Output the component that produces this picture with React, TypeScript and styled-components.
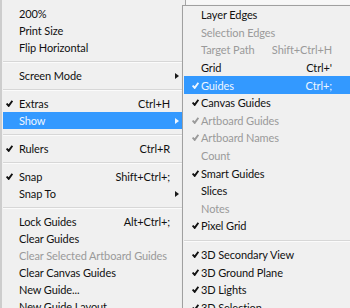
import React from 'react'
import styled, { createGlobalStyle } from 'styled-components'

type Item =
  | 'sep'
  | {
      label: string
      shortcut?: string
      checked?: boolean
      disabled?: boolean
      submenu?: boolean
      active?: boolean
    }

const mainItems: Item[] = [
  { label: '200%' },
  { label: 'Print Size' },
  { label: 'Flip Horizontal' },
  'sep',
  { label: 'Screen Mode', submenu: true },
  'sep',
  { label: 'Extras', shortcut: 'Ctrl+H', checked: true },
  { label: 'Show', submenu: true, active: true },
  'sep',
  { label: 'Rulers', shortcut: 'Ctrl+R', checked: true },
  'sep',
  { label: 'Snap', shortcut: 'Shift+Ctrl+;', checked: true },
  { label: 'Snap To', submenu: true },
  'sep',
  { label: 'Lock Guides', shortcut: 'Alt+Ctrl+;' },
  { label: 'Clear Guides' },
  { label: 'Clear Selected Artboard Guides', disabled: true },
  { label: 'Clear Canvas Guides' },
  { label: 'New Guide...' },
  { label: 'New Guide Layout' }
]

const showItems: Item[] = [
  { label: 'Layer Edges' },
  { label: 'Selection Edges', disabled: true },
  { label: 'Target Path', shortcut: 'Shift+Ctrl+H', disabled: true },
  { label: 'Grid', shortcut: "Ctrl+'" },
  { label: 'Guides', shortcut: 'Ctrl+;', checked: true, active: true },
  { label: 'Canvas Guides', checked: true },
  { label: 'Artboard Guides', checked: true, disabled: true },
  { label: 'Artboard Names', checked: true, disabled: true },
  { label: 'Count', disabled: true },
  { label: 'Smart Guides', checked: true },
  { label: 'Slices' },
  { label: 'Notes', disabled: true },
  { label: 'Pixel Grid', checked: true },
  'sep',
  { label: '3D Secondary View', checked: true },
  { label: '3D Ground Plane', checked: true },
  { label: '3D Lights', checked: true },
  { label: '3D Selection', checked: true }
]

const GlobalStyle = createGlobalStyle`
  html, body {
    margin: 0;
    padding: 0;
    background: #f7f7f7;
    overflow: hidden;
  }
  body {
    font-family: Lato, "Noto Sans", sans-serif;
    font-size: 11px;
    letter-spacing: -0.1px;
    color: #1a1a1a;
  }
`

const Screen = styled.div`
  position: relative;
  width: 350px;
  height: 308px;
  overflow: hidden;
`

const MainMenu = styled.div`
  width: 180px;
  height: 320px;
  padding: 5px 2px 0 1px;
  background: #f0f0f0;
  border-left: 2px solid #cdcdcd;
  border-right: 1px solid #a7a7a7;
  box-sizing: content-box;
`

/* the Show flyout lies over the right edge of the main menu */
const SubMenu = styled.div`
  position: absolute;
  left: 182px;
  top: 5px;
  width: 190px;
  height: 320px;
  padding: 0 1px;
  background: #f0f0f0;
  border: 1px solid #a0a0a0;
  box-shadow: 2px 2px 3px rgba(0, 0, 0, 0.25);
`

const Row = styled.div<{ $active?: boolean; $disabled?: boolean; $h: number; $pad: number }>`
  display: flex;
  align-items: center;
  height: ${({ $h }) => $h}px;
  padding-left: ${({ $pad }) => $pad}px;
  white-space: nowrap;
  background: ${({ $active }) => ($active ? '#3399ff' : 'transparent')};
  color: ${({ $active, $disabled }) => ($active ? '#eef6ff' : $disabled ? '#9a9a9a' : '#111')};
`

const CheckSlot = styled.span<{ $w: number }>`
  display: flex;
  align-items: center;
  width: ${({ $w }) => $w}px;
  flex: none;
`

const Label = styled.span`
  flex: 1;
`

const Shortcut = styled.span<{ $right: number }>`
  margin-right: ${({ $right }) => $right}px;
`

const ArrowSlot = styled.span`
  display: flex;
  align-items: center;
  width: 12px;
  flex: none;
  padding-left: 4px;
  box-sizing: border-box;
`

const Arrow = styled.span<{ $active?: boolean }>`
  width: 0;
  height: 0;
  border-top: 3.5px solid transparent;
  border-bottom: 3.5px solid transparent;
  border-left: 4px solid ${({ $active }) => ($active ? '#eef6ff' : '#1a1a1a')};
`

const Separator = styled.div`
  margin: 5px 0 4px;
  height: 1px;
  background: #d7d7d7;
  border-bottom: 1px solid #fbfbfb;
`

function Check() {
  return (
    <svg width="7" height="7" viewBox="0 0 7 7">
      <path d="M0.7 3.5 L2.7 5.9 L6.4 0.8" fill="none" stroke="currentColor" strokeWidth="1.9" />
    </svg>
  )
}

function MenuList({
  items,
  rowHeight,
  pad,
  checkWidth,
  shortcutRight,
  arrows
}: {
  items: Item[]
  rowHeight: number
  pad: number
  checkWidth: number
  shortcutRight: number
  arrows: boolean
}) {
  return (
    <>
      {items.map((item, i) =>
        item === 'sep' ? (
          <Separator key={i} />
        ) : (
          <Row key={i} $active={item.active} $disabled={item.disabled} $h={rowHeight} $pad={pad}>
            <CheckSlot $w={checkWidth}>{item.checked && <Check />}</CheckSlot>
            <Label>{item.label}</Label>
            {item.shortcut && <Shortcut $right={shortcutRight}>{item.shortcut}</Shortcut>}
            {arrows && <ArrowSlot>{item.submenu && <Arrow $active={item.active} />}</ArrowSlot>}
          </Row>
        )
      )}
    </>
  )
}

export default function App() {
  return (
    <Screen>
      <GlobalStyle />
      <MainMenu>
        <MenuList items={mainItems} rowHeight={17} pad={3} checkWidth={13} shortcutRight={1} arrows />
      </MainMenu>
      <SubMenu>
        <MenuList items={showItems} rowHeight={17.6} pad={8} checkWidth={9} shortcutRight={42} arrows={false} />
      </SubMenu>
    </Screen>
  )
}
